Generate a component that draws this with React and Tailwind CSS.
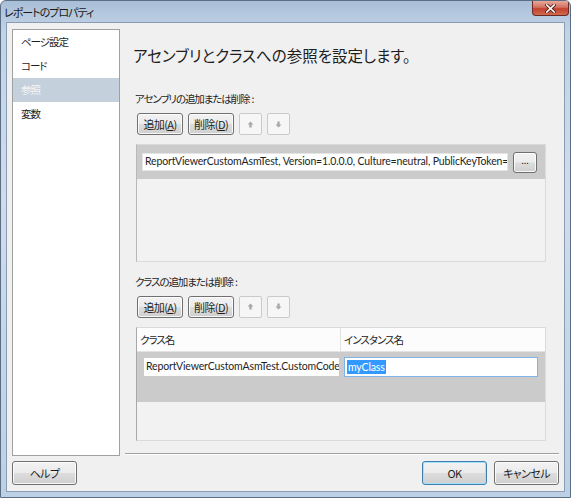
import React from "react";

const jp = "font-['Noto_Sans_CJK_JP','Noto_Sans',sans-serif] [font-feature-settings:'palt']";
const latin = "font-['Lato','Noto_Sans',sans-serif] tracking-[-0.15px]";

function WinButton({ children, className = "", primary = false }) {
    return (
        <div
            className={`flex items-center justify-center rounded-[3px] border ${
                primary ? "border-[#3c7fb1]" : "border-[#707070]"
            } bg-[linear-gradient(#f2f2f2_0%,#ebebeb_48%,#dddddd_52%,#cfcfcf_100%)] text-[11px] tracking-[-0.6px] text-[#1e1e1e] ${jp} ${className}`}
        >
            {children}
        </div>
    );
}

function ArrowButton({ down = false }) {
    return (
        <div className="w-[23px] h-[22px] flex items-center justify-center rounded-[2px] border border-[#c8cbcd] bg-[#f6f6f6]">
            <svg width="7" height="7" viewBox="0 0 7 7" className={down ? "rotate-180" : ""}>
                <path d="M3.5 0.5 L6.5 3.5 L4.7 3.5 L4.7 6.5 L2.3 6.5 L2.3 3.5 L0.5 3.5 Z" fill="#a8a8a8" />
            </svg>
        </div>
    );
}

function ButtonRow() {
    return (
        <div className="flex gap-[5px] ml-[17px]">
            <WinButton className="w-[46px] h-[22px] shadow-[inset_0_0_0_1px_rgba(255,255,255,0.8)]">
                追加(<span className="underline">A</span>)
            </WinButton>
            <WinButton className="w-[46px] h-[22px] shadow-[inset_0_0_0_1px_rgba(255,255,255,0.8)]">
                削除(<span className="underline">D</span>)
            </WinButton>
            <ArrowButton />
            <ArrowButton down />
        </div>
    );
}

function SectionLabel({ children }) {
    return (
        <div className={`ml-[15px] text-[10.5px] tracking-[-1.1px] leading-[16px] text-[#1e1e1e] ${jp}`}>
            {children}
            <span className="ml-[2px] tracking-[0px]">:</span>
        </div>
    );
}

export default function App() {
    const navItems = ["ページ設定", "コード", "参照", "変数"];

    return (
        <div className="w-[571px] h-[498px] flex flex-col overflow-hidden rounded-t-[6px] border border-[#5c6e84] bg-[linear-gradient(180deg,#a9bfd8_0%,#c2d3e6_6%,#cfdcec_40%,#bcd0e6_100%)]">
            {/* Title bar */}
            <div className="h-[21px] flex items-start justify-between pl-[3px] pr-[1px]">
                <span className={`mt-[3px] text-[11px] tracking-[-1px] text-[#1a1a1a] ${jp}`}>レポートのプロパティ</span>
                <div className="w-[37px] h-[15px] rounded-b-[4px] border border-t-0 border-[#6b2a22] bg-[linear-gradient(#e8a898_0%,#d27160_45%,#c2412c_55%,#d06a50_100%)] flex items-center justify-center">
                    <svg width="11" height="9" viewBox="0 0 11 9">
                        <path d="M1.8 1 L9.2 8 M9.2 1 L1.8 8" stroke="#4a1a14" strokeWidth="3.2" strokeLinecap="square" />
                        <path d="M1.8 1 L9.2 8 M9.2 1 L1.8 8" stroke="#ffffff" strokeWidth="1.7" strokeLinecap="square" />
                    </svg>
                </div>
            </div>

            {/* Client area */}
            <div className="ml-[5px] mr-[5px] h-[470px] border border-[#8a9cb2] bg-[#f0f0f0] flex flex-col">
                <div className="flex h-[432px]">
                    {/* Left nav */}
                    <div className="ml-[5px] mt-[6px] w-[108px] h-[427px] border border-[#a0a0a0] bg-white shrink-0">
                        {navItems.map((item) => (
                            <div
                                key={item}
                                className={`h-[24px] flex items-center pl-[8px] text-[10.5px] tracking-[-1px] ${jp} ${
                                    item === "参照" ? "bg-[#c4d0dc] text-[#f4f6f8]" : "text-[#1e1e1e]"
                                }`}
                            >
                                {item}
                            </div>
                        ))}
                    </div>

                    {/* Right panel */}
                    <div className="flex-1 flex flex-col">
                        <div className={`ml-[13px] mt-[22px] text-[15.5px] leading-[20px] text-[#1e1e1e] ${jp}`}>
                            アセンブリとクラスへの参照を設定します。
                        </div>

                        <div className="mt-[26px]">
                            <SectionLabel>アセンブリの追加または削除</SectionLabel>
                        </div>
                        <div className="mt-[6px]">
                            <ButtonRow />
                        </div>

                        {/* Assembly list */}
                        <div className="ml-[16px] mr-[18px] mt-[9px] h-[119px] border border-[#dadada] border-l-[#b8b8b8] bg-[#f2f2f2]">
                            <div className="h-[34px] bg-[#cbcbcb] flex items-center pl-[5px] pr-[7px] gap-[5px]">
                                <div className={`w-[366px] h-[18px] shrink-0 bg-white border border-[#e4e4e4] flex items-center pl-[2px] overflow-hidden whitespace-nowrap text-[10.5px] text-[#1e1e1e] ${latin}`}>
                                    ReportViewerCustomAsmTest, Version=1.0.0.0, Culture=neutral, PublicKeyToken=b
                                </div>
                                <WinButton className="w-[24px] h-[21px] shrink-0 shadow-[inset_0_0_0_1px_rgba(255,255,255,0.8)]">
                                    <span className="text-[9px] tracking-[0px] -mt-[3px]">...</span>
                                </WinButton>
                            </div>
                        </div>

                        <div className="mt-[12px]">
                            <SectionLabel>クラスの追加または削除</SectionLabel>
                        </div>
                        <div className="mt-[6px]">
                            <ButtonRow />
                        </div>

                        {/* Class table */}
                        <div className="ml-[16px] mr-[18px] mt-[9px] h-[115px] border border-[#dadada] border-l-[#a8a8a8] bg-[#f2f2f2] flex flex-col">
                            <div className={`h-[24px] bg-[#fcfcfc] border-b border-[#e2e2e2] flex text-[10.5px] tracking-[-1px] text-[#1e1e1e] ${jp}`}>
                                <div className="w-[204px] border-r border-[#e2e2e2] flex items-center pl-[3px]">クラス名</div>
                                <div className="flex-1 flex items-center pl-[3px]">インスタンス名</div>
                            </div>
                            <div className="h-[50px] bg-[#cbcbcb] flex items-start pt-[6px] pl-[7px] gap-[5px]">
                                <div className={`w-[195px] h-[18px] bg-white flex items-center pl-[2px] overflow-hidden whitespace-nowrap text-[10.5px] text-[#1e1e1e] ${latin}`}>
                                    ReportViewerCustomAsmTest.CustomCode
                                </div>
                                <div className={`w-[194px] h-[20px] -mt-[1px] bg-white border border-[#7eb4ea] flex items-center pl-[2px] text-[10.5px] ${latin}`}>
                                    <span className="bg-[#3399ff] text-white leading-[14px] px-[1px]">myClass</span>
                                </div>
                            </div>
                        </div>

                        {/* Separator */}
                        <div className="ml-[5px] mr-[5px] mt-[12px] h-[2px] border-t border-[#a0a0a0] border-b border-b-white" />
                    </div>
                </div>

                {/* Bottom buttons */}
                <div className="flex items-center pl-[5px] pr-[5px] mt-[6px]">
                    <WinButton className="w-[65px] h-[24px] shadow-[inset_0_0_0_1px_rgba(255,255,255,0.8)]">ヘルプ</WinButton>
                    <div className="flex-1" />
                    <WinButton primary className="w-[65px] h-[24px] shadow-[inset_0_0_0_1px_#a6e0f8]">OK</WinButton>
                    <WinButton className="w-[65px] h-[24px] ml-[7px] shadow-[inset_0_0_0_1px_rgba(255,255,255,0.8)]">キャンセル</WinButton>
                </div>
            </div>
        </div>
    );
}
